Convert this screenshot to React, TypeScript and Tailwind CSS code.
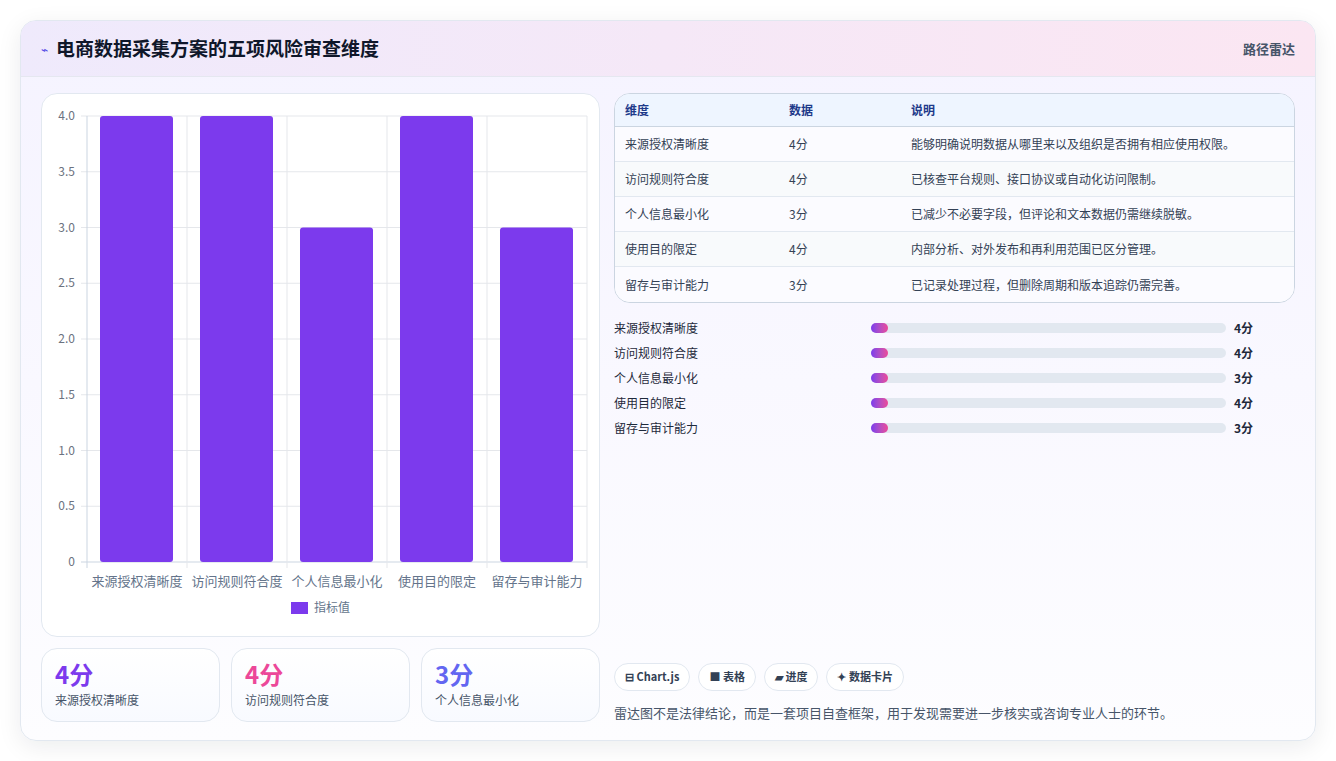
import React from "react";

const dims = [
  { n: "来源授权清晰度", v: 4, d: "能够明确说明数据从哪里来以及组织是否拥有相应使用权限。" },
  { n: "访问规则符合度", v: 4, d: "已核查平台规则、接口协议或自动化访问限制。" },
  { n: "个人信息最小化", v: 3, d: "已减少不必要字段，但评论和文本数据仍需继续脱敏。" },
  { n: "使用目的限定", v: 4, d: "内部分析、对外发布和再利用范围已区分管理。" },
  { n: "留存与审计能力", v: 3, d: "已记录处理过程，但删除周期和版本追踪仍需完善。" },
];

function Chart() {
  const x0 = 45, top = 22, bottom = 468, w = 500;
  const ticks = [4, 3.5, 3, 2.5, 2, 1.5, 1, 0.5, 0];
  const y = (v: number) => bottom - (v / 4) * (bottom - top);
  return (
    <svg width="559" height="543" className="block">
      {ticks.map((t) => (
        <g key={t}>
          <line x1={x0 - 6} x2={x0 + w} y1={y(t)} y2={y(t)} stroke={t === 0 ? "#cbd5e1" : "#e5e7eb"} />
          <text x={x0 - 12} y={y(t) + 4} textAnchor="end" fontSize="12" fill="#6b7280">
            {t === 0 ? "0" : t.toFixed(1)}
          </text>
        </g>
      ))}
      {[0, 1, 2, 3, 4, 5].map((i) => (
        <line key={i} x1={x0 + i * 100} x2={x0 + i * 100} y1={top} y2={bottom + 6} stroke={i === 0 ? "#cbd5e1" : "#e5e7eb"} />
      ))}
      {dims.map((d, i) => (
        <g key={d.n}>
          <rect x={x0 + i * 100 + 13} y={y(d.v)} width={73} height={bottom - y(d.v)} rx="3" fill="#7c3aed" />
          <text x={x0 + i * 100 + 50} y={bottom + 24} textAnchor="middle" fontSize="13" fill="#64748b">{d.n}</text>
        </g>
      ))}
      <rect x="249" y="508" width="17" height="12" fill="#7c3aed" />
      <text x="272" y="518" fontSize="12" fill="#64748b">指标值</text>
    </svg>
  );
}

export default function App() {
  const font = { fontFamily: '"Noto Sans CJK SC", "Noto Sans", sans-serif' };
  return (
    <div className="w-[1336px] h-[761px] bg-white p-5" style={font}>
      <div className="rounded-2xl border border-[#e2e8f0] shadow-[0_6px_24px_rgba(15,23,42,0.08)] overflow-hidden h-[721px] flex flex-col bg-gradient-to-b from-[#f5f3ff] to-[#fdfdff]">
        <div className="h-[56px] flex items-center justify-between px-5 border-b border-[#e5e7f0] bg-gradient-to-r from-[#efeafc] to-[#fbe6f2]">
          <div className="flex items-center gap-2">
            <span className="text-[#4f46e5] text-[12px]">⌁</span>
            <h1 className="text-[19px] font-bold text-[#0f172a]">电商数据采集方案的五项风险审查维度</h1>
          </div>
          <span className="text-[13px] font-semibold text-[#475569]">路径雷达</span>
        </div>
        <div className="flex-1 flex gap-[14px] px-5 pt-4 pb-[18px]">
          <div className="w-[559px] flex flex-col gap-[11px]">
            <div className="h-[544px] rounded-2xl border border-[#e2e8f0] bg-white">
              <Chart />
            </div>
            <div className="flex gap-[11px]">
              {[
                ["4分", "来源授权清晰度", "text-[#7c3aed]"],
                ["4分", "访问规则符合度", "text-[#ec4899]"],
                ["3分", "个人信息最小化", "text-[#6366f1]"],
              ].map(([v, l, c]) => (
                <div key={l} className="flex-1 h-[74px] rounded-2xl border border-[#e2e8f0] bg-gradient-to-b from-white to-[#f8faff] px-[13px] pt-[10px]">
                  <div className={`text-[24px] font-bold leading-[30px] ${c}`}>{v}</div>
                  <div className="text-[12px] text-[#475569] mt-[2px]">{l}</div>
                </div>
              ))}
            </div>
          </div>
          <div className="flex-1 flex flex-col justify-between">
            <div>
              <div className="rounded-2xl border border-[#cbd5e1] overflow-hidden bg-white">
                <div className="flex h-[33px] items-center bg-[#eef5ff] border-b border-[#cbd5e1] text-[12px] font-semibold text-[#1e3a8a] px-[10px]">
                  <span className="w-[164px]">维度</span>
                  <span className="w-[122px]">数据</span>
                  <span>说明</span>
                </div>
                {dims.map((d, i) => (
                  <div key={d.n} className={`flex h-[35px] items-center text-[12px] text-[#334155] px-[10px] ${i < 4 ? "border-b border-[#e2e8f0]" : ""} ${i % 2 ? "bg-[#f8fafc]" : "bg-[#fbfbff]"}`}>
                    <span className="w-[164px]">{d.n}</span>
                    <span className="w-[122px]">{d.v}分</span>
                    <span>{d.d}</span>
                  </div>
                ))}
              </div>
              <div className="mt-[12px] flex flex-col">
                {dims.map((d) => (
                  <div key={d.n} className="flex items-center h-[25px] text-[12px] text-[#1e293b]">
                    <span className="w-[257px]">{d.n}</span>
                    <div className="w-[355px] h-[10px] rounded-full bg-[#e2e8f0]">
                      <div className="h-full w-[17px] rounded-full bg-gradient-to-r from-[#7c3aed] to-[#ec4899]" />
                    </div>
                    <span className="ml-2 font-bold">{d.v}分</span>
                  </div>
                ))}
              </div>
            </div>
            <div>
              <div className="flex gap-2">
                {["⊟ Chart.js", "■ 表格", "▰ 进度", "✦ 数据卡片"].map((c) => (
                  <span key={c} className="h-[28px] px-[10px] flex items-center rounded-full border border-[#e2e8f0] bg-white text-[11px] font-semibold text-[#334155]">{c}</span>
                ))}
              </div>
              <p className="mt-[12px] text-[13px] text-[#475569]">雷达图不是法律结论，而是一套项目自查框架，用于发现需要进一步核实或咨询专业人士的环节。</p>
            </div>
          </div>
        </div>
      </div>
    </div>
  );
}
